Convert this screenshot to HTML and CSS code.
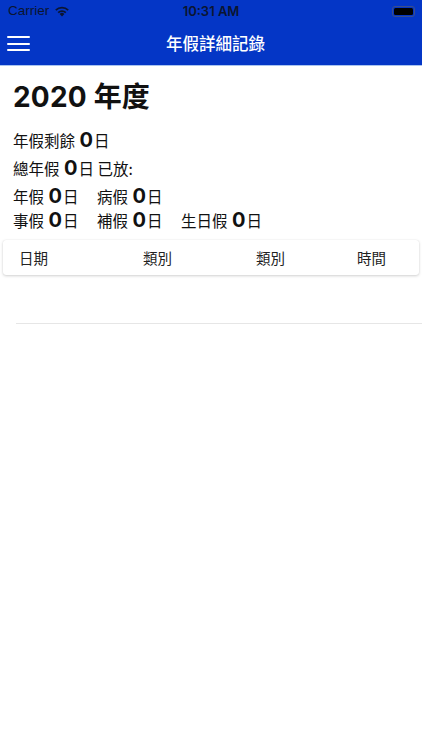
FILE: index.html
```html
<!DOCTYPE html>
<html lang="zh-Hant">
<head>
<meta charset="utf-8">
<title>年假詳細記錄</title>
<link rel="stylesheet" href="styles.css">
</head>
<body>
<header class="header">
  <div class="status">
    <div class="status-left">
      <span class="carrier">Carrier</span>
      <svg class="wifi" width="16" height="12" viewBox="0 0 16 12">
        <path d="M8 11.5 L5.6 9 A3.4 3.4 0 0 1 10.4 9 Z" fill="#0b1530"/>
        <path d="M3.6 7 A6.3 6.3 0 0 1 12.4 7 L11.2 8.2 A4.6 4.6 0 0 0 4.8 8.2 Z" fill="#0b1530"/>
        <path d="M1.2 4.6 A9.7 9.7 0 0 1 14.8 4.6 L13.6 5.8 A8 8 0 0 0 2.4 5.8 Z" fill="#0b1530"/>
      </svg>
    </div>
    <span class="clock">10:31 AM</span>
    <div class="battery"><div class="battery-fill"></div></div>
  </div>
  <div class="navbar">
    <div class="menu">
      <span></span><span></span><span></span>
    </div>
    <h1 class="title">年假詳細記錄</h1>
  </div>
</header>
<main class="content">
  <h2 class="year">2020 年度</h2>
  <p class="line line-main">年假剩餘 <b class="num">0</b>日</p>
  <p class="line line-main">總年假 <b class="num">0</b>日 已放:</p>
  <div class="types">
    <p class="line"><span class="item">年假 <b class="num">0</b>日</span><span class="item">病假 <b class="num">0</b>日</span></p>
    <p class="line"><span class="item">事假 <b class="num">0</b>日</span><span class="item">補假 <b class="num">0</b>日</span><span class="item">生日假 <b class="num">0</b>日</span></p>
  </div>
</main>
<section class="table">
  <div class="thead">
    <span>日期</span><span>類別</span><span>類別</span><span>時間</span>
  </div>
  <div class="empty"></div>
  <div class="divider"></div>
</section>
</body>
</html>
```
FILE: styles.css
```css
* { box-sizing: border-box; }
html, body { margin: 0; padding: 0; }
body {
  width: 422px;
  height: 750px;
  background: #ffffff;
  font-family: "Inter", "Noto Sans CJK TC", sans-serif;
  color: #111111;
  overflow: hidden;
}
.header {
  background: #0436c6;
  height: 65px;
  box-shadow: 0 1px 0 #a9c4f0;
}
.status {
  height: 22px;
  display: flex;
  align-items: center;
  justify-content: space-between;
  padding: 0 8px 0 8px;
  position: relative;
}
.status-left { display: flex; align-items: center; gap: 5px; }
.carrier {
  font-family: "Liberation Sans", "Inter", sans-serif;
  font-size: 13.5px;
  color: #0b1530;
  line-height: 1;
}
.wifi { display: block; margin-top: -1px; }
.clock {
  position: absolute;
  left: 0; right: 0;
  text-align: center;
  font-size: 13px;
  font-weight: 600;
  color: #0b1530;
  line-height: 1;
}
.battery {
  width: 23px;
  height: 11px;
  border: 1px solid #3b4e8a;
  border-radius: 3px;
  padding: 1px;
  margin-right: -1px;
}
.battery-fill { width: 100%; height: 100%; background: #000; border-radius: 1.5px; }
.navbar {
  height: 43px;
  display: flex;
  align-items: center;
  position: relative;
}
.menu {
  display: flex;
  flex-direction: column;
  gap: 4.5px;
  margin-left: 7px;
  width: 23px;
}
.menu span { display: block; height: 2px; background: #ffffff; border-radius: 1px; }
.title {
  position: absolute;
  left: 0; right: 0;
  margin: 0;
  text-align: center;
  font-family: "Noto Sans CJK TC", sans-serif;
  font-size: 16.5px;
  font-weight: 500;
  color: #ffffff;
  padding-left: 9px;
  margin-top: -1px;
}
.content { padding: 14px 13px 0 13px; }
.year {
  margin: 0 0 13px 0;
  font-size: 28px;
  font-weight: 700;
  line-height: 36px;
  font-family: "Inter", "Noto Sans CJK TC", sans-serif;
  letter-spacing: 0.2px;
}
.line {
  margin: 0;
  font-family: "Noto Sans CJK TC", sans-serif;
  font-size: 15.5px;
  line-height: 24px;
  display: flex;
  align-items: baseline;
  white-space: pre;
}
.line-main { margin-bottom: 4px; }
.num {
  font-family: "Inter", sans-serif;
  font-weight: 700;
  font-size: 20px;
  margin: 0 1px 0 1px;
}
.item { width: 84px; display: inline-block; }
.types .line { line-height: 24px; }
.table { padding: 8px 3px 0 3px; }
.thead {
  display: grid;
  grid-template-columns: 124px 113px 101px auto;
  padding-left: 16px;
  height: 35px;
  align-items: center;
  background: #ffffff;
  border-radius: 3px;
  box-shadow: 0 1px 3px rgba(0,0,0,0.18), 0 0 1px rgba(0,0,0,0.12);
  font-family: "Noto Sans CJK TC", sans-serif;
  font-size: 14.5px;
  color: #222;
}
.empty { height: 48px; }
.divider { height: 1px; background: #e6e6e6; margin-left: 13px; margin-right: -3px; }
```
